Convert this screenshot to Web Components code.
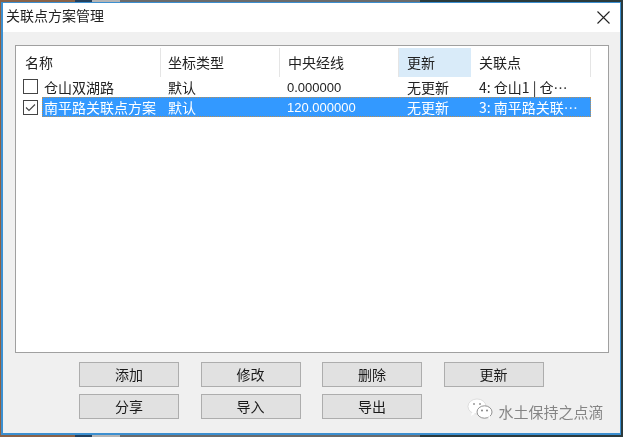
<!DOCTYPE html>
<html>
<head>
<meta charset="utf-8">
<title>关联点方案管理</title>
<style>
  html, body { margin: 0; height: 100%; }
  body {
    width: 623px;
    height: 437px;
    overflow: hidden;
    font-family: "Noto Sans CJK SC", "Liberation Sans", sans-serif;
    background: linear-gradient(90deg, #8a6247 0, #8a6247 75px, #24405c 75px, #24405c 92px, #b5b5b5 92px, #b5b5b5 120px, #6b6b6b 120px, #6b6b6b 420px, #2b3a3c 420px, #2b3a3c 623px);
  }
</style>
</head>
<body>
<point-dialog title="关联点方案管理">
  <point-table>
    <table-head>
      <head-cell style="--w:143px;--pad:7px">名称</head-cell>
      <head-cell style="--w:119px;--pad:7px">坐标类型</head-cell>
      <head-cell style="--w:119px;--pad:8px">中央经线</head-cell>
      <head-cell style="--w:72px;--pad:8px" hot>更新</head-cell>
      <head-cell style="--w:120px;--pad:8px">关联点</head-cell>
    </table-head>
    <table-row name="仓山双湖路" type="默认" meridian="0.000000" state="无更新" points="4: 仓山1 | 仓…"></table-row>
    <table-row name="南平路关联点方案" type="默认" meridian="120.000000" state="无更新" points="3: 南平路关联…" checked selected></table-row>
  </point-table>
  <button-grid>
    <flat-button>添加</flat-button>
    <flat-button>修改</flat-button>
    <flat-button>删除</flat-button>
    <flat-button>更新</flat-button>
    <flat-button>分享</flat-button>
    <flat-button>导入</flat-button>
    <flat-button>导出</flat-button>
    <wechat-mark>水土保持之点滴</wechat-mark>
  </button-grid>
</point-dialog>

<script>
// dialog window: title bar + content area
class PointDialog extends HTMLElement {
  constructor() {
    super();
    this.attachShadow({ mode: 'open' });
  }

  connectedCallback() {
    this.shadowRoot.innerHTML = `
      <style>
        :host {
          display: flex;
          flex-direction: column;
          box-sizing: border-box;
          width: 620px;
          height: 433px;
          margin: 2px 2px 2px 1px;
          background: #f0f0f0;
          border: 1px solid #3c8fd0;
          border-left-width: 2px;
          border-bottom-width: 2px;
          filter: blur(.3px);
        }
        .title {
          display: flex;
          align-items: center;
          justify-content: space-between;
          height: 29px;
          flex: none;
          background: #fff;
          padding: 0 10px 0 3px;
          font-size: 14px;
          color: #222;
        }
        .title span { padding-bottom: 6px; }
        .close { width: 13px; height: 13px; display: block; }
        .body { flex: 1; padding: 13px 9px 0 12px; }
      </style>
      <div class="title">
        <span>${this.getAttribute('title')}</span>
        <svg class="close" viewBox="0 0 13 13"><path d="M.5.5l12 12M12.5.5l-12 12" stroke="#222" stroke-width="1.1" fill="none"/></svg>
      </div>
      <div class="body"><slot></slot></div>
    `;
  }
}

// white list box holding header + rows
class PointTable extends HTMLElement {
  constructor() {
    super();
    this.attachShadow({ mode: 'open' });
    this.shadowRoot.innerHTML = `
      <style>
        :host {
          display: block;
          box-sizing: border-box;
          width: 594px;
          height: 308px;
          background: #fff;
          border: 1px solid #a0a0a0;
          padding: 2px;
        }
      </style>
      <slot></slot>
    `;
  }
}

class TableHead extends HTMLElement {
  constructor() {
    super();
    this.attachShadow({ mode: 'open' });
    this.shadowRoot.innerHTML = `
      <style>
        :host { display: flex; height: 29px; }
      </style>
      <slot></slot>
    `;
  }
}

class HeadCell extends HTMLElement {
  constructor() {
    super();
    this.attachShadow({ mode: 'open' });
    this.shadowRoot.innerHTML = `
      <style>
        :host {
          display: flex;
          align-items: center;
          box-sizing: border-box;
          width: var(--w);
          padding-left: var(--pad);
          padding-bottom: 2px;
          font-size: 14px;
          color: #222;
          border-right: 1px solid #e5e5e5;
        }
        :host([hot]) { background: #d9ebf9; border-right-color: #d9ebf9; }
      </style>
      <slot></slot>
    `;
  }
}

class TableRow extends HTMLElement {
  constructor() {
    super();
    this.attachShadow({ mode: 'open' });
  }

  connectedCallback() {
    const get = (name) => this.getAttribute(name);
    this.shadowRoot.innerHTML = `
      <style>
        :host { display: flex; height: 20px; font-size: 14px; color: #222; }
        .check {
          flex: none;
          box-sizing: border-box;
          width: 15px;
          height: 15px;
          margin: 2px 4px 0 5px;
          border: 1px solid #444;
          background: #fff;
        }
        :host([checked]) .check { margin-top: 3px; }
        .check svg { display: block; }
        .cols { display: flex; width: 549px; flex: none; align-items: center; height: 20px; }
        .cols span { display: block; white-space: nowrap; overflow: hidden; box-sizing: border-box; }
        .name { width: 119px; padding-left: 2px; }
        .type { width: 119px; padding-left: 7px; }
        .meridian { width: 119px; padding-left: 7px; font: 13px "Liberation Sans", sans-serif; }
        .state { width: 72px; padding-left: 8px; }
        .points { width: 120px; padding-left: 8px; }
        :host([selected]) .cols {
          background: #3399ff;
          color: #fff;
          outline: 1px dotted #b98f55;
          outline-offset: -1px;
        }
      </style>
      <div class="check">${this.hasAttribute('checked')
        ? '<svg viewBox="0 0 13 13" width="13" height="13"><path d="M2 6.5l3 3 6-6" stroke="#444" stroke-width="1.1" fill="none"/></svg>'
        : ''}</div>
      <div class="cols">
        <span class="name">${get('name')}</span>
        <span class="type">${get('type')}</span>
        <span class="meridian">${get('meridian')}</span>
        <span class="state">${get('state')}</span>
        <span class="points">${get('points')}</span>
      </div>
    `;
  }
}

class ButtonGrid extends HTMLElement {
  constructor() {
    super();
    this.attachShadow({ mode: 'open' });
    this.shadowRoot.innerHTML = `
      <style>
        :host {
          display: grid;
          grid-template-columns: repeat(4, 100px);
          grid-auto-rows: 25px;
          column-gap: 21.5px;
          row-gap: 7px;
          margin: 9px 0 0 64px;
        }
      </style>
      <slot></slot>
    `;
  }
}

class FlatButton extends HTMLElement {
  constructor() {
    super();
    this.attachShadow({ mode: 'open' });
    this.shadowRoot.innerHTML = `
      <style>
        :host {
          display: flex;
          align-items: center;
          justify-content: center;
          box-sizing: border-box;
          padding-bottom: 2px;
          background: #e1e1e1;
          border: 1px solid #adadad;
          font-size: 14px;
          color: #1a1a1a;
        }
      </style>
      <slot></slot>
    `;
  }
}

// watermark in the bottom right corner
class WechatMark extends HTMLElement {
  constructor() {
    super();
    this.attachShadow({ mode: 'open' });
    this.shadowRoot.innerHTML = `
      <style>
        :host {
          display: flex;
          align-items: center;
          gap: 6px;
          margin-left: 23px;
          padding-top: 5px;
          box-sizing: border-box;
          width: 150px;
          font-size: 15px;
          color: #858585;
          white-space: nowrap;
        }
        svg { flex: none; }
        span { padding-top: 4px; }
      </style>
      <svg width="26" height="22" viewBox="0 0 26 22">
        <ellipse cx="10" cy="8.5" rx="9" ry="7.5" fill="#fff" stroke="#ccc" stroke-width=".6"/>
        <path d="M5 14l-1 4 4-2.5z" fill="#fff"/>
        <ellipse cx="17.5" cy="14" rx="7.5" ry="6.2" fill="#fff" stroke="#777" stroke-width=".8"/>
        <path d="M21 19l2 2.5-.2-4z" fill="#fff"/>
        <circle cx="7" cy="6" r="1" fill="#999"/><circle cx="13" cy="6" r="1" fill="#999"/>
        <circle cx="15" cy="12.5" r=".9" fill="#777"/><circle cx="20" cy="12.5" r=".9" fill="#777"/>
      </svg>
      <span><slot></slot></span>
    `;
  }
}

customElements.define('point-dialog', PointDialog);
customElements.define('point-table', PointTable);
customElements.define('table-head', TableHead);
customElements.define('head-cell', HeadCell);
customElements.define('table-row', TableRow);
customElements.define('button-grid', ButtonGrid);
customElements.define('flat-button', FlatButton);
customElements.define('wechat-mark', WechatMark);
</script>
</body>
</html>
